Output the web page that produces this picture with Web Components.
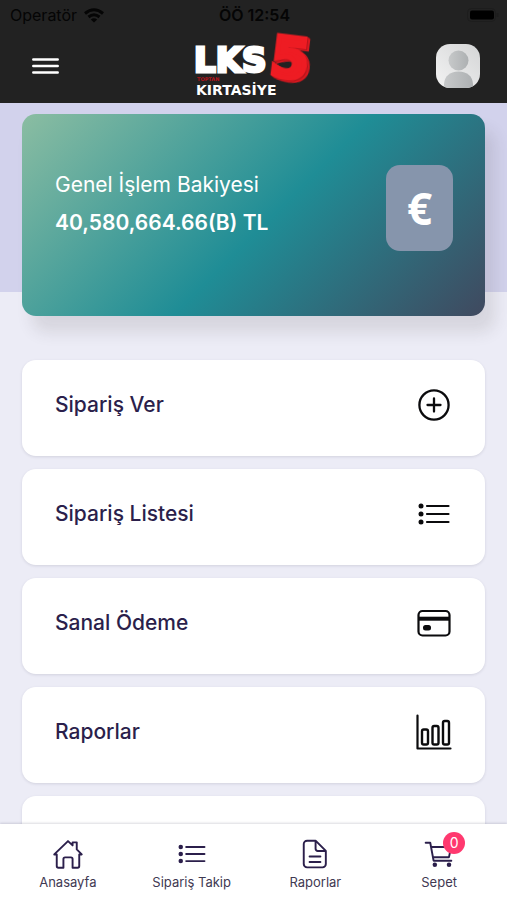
<!DOCTYPE html>
<html lang="tr">
<head>
<meta charset="utf-8">
<meta name="viewport" content="width=device-width, initial-scale=1">
<title>LKS5 Kırtasiye</title>
<style>
  body { margin: 0; font-family: Inter, "Liberation Sans", sans-serif; color: #2b1f4b; background: #ececf6; }
</style>
</head>
<body>
<lks-app>
  <status-bar slot="top" carrier="Operatör" time="ÖÖ 12:54"></status-bar>
  <app-header slot="top"></app-header>
  <balance-card>
    <span slot="label">Genel İşlem Bakiyesi</span>
    <span slot="amount">40,580,664.66(B) TL</span>
  </balance-card>
  <menu-card icon="plus">Sipariş Ver</menu-card>
  <menu-card icon="list">Sipariş Listesi</menu-card>
  <menu-card icon="card">Sanal Ödeme</menu-card>
  <menu-card icon="chart">Raporlar</menu-card>
  <menu-card></menu-card>
  <tab-bar slot="bottom">
    <tab-item icon="home">Anasayfa</tab-item>
    <tab-item icon="list-small">Sipariş Takip</tab-item>
    <tab-item icon="document">Raporlar</tab-item>
    <tab-item icon="cart" badge="0">Sepet</tab-item>
  </tab-bar>
</lks-app>

<script>
const ICONS = {
  plus: '<circle cx="18" cy="18" r="14.6" stroke-width="2.3"/><path d="M18 11.500v13M11.500 18h13" stroke-width="2.3"/>',
  list: '<g fill="currentColor" stroke="none"><circle cx="5" cy="10" r="2.5"/><circle cx="5" cy="18" r="2.5"/><circle cx="5" cy="26" r="2.5"/></g><path d="M11 10h21.500M11 18h21.500M11 26h21.500" stroke-width="2.200"/>',
  card: '<rect x="2.500" y="6" width="31" height="24.500" rx="4" stroke-width="2.200"/><path d="M3 13.700h30" stroke-width="4" stroke-linecap="butt"/><rect x="7" y="20" width="8" height="5.500" rx="2.500" fill="currentColor" stroke="none"/>',
  chart: '<path d="M1.500 1.500v33h33" stroke-width="2.200"/><g stroke-width="2.400"><rect x="6" y="15.500" width="6" height="15" rx="1.700"/><rect x="16.500" y="12" width="6" height="18.500" rx="1.700"/><rect x="27" y="7" width="6" height="23.500" rx="1.700"/></g>',
  home: '<path d="M1.500 18.500 18 2.500l5.500 5.200V4h5v8.500l6 6h-3v14a2 2 0 0 1-2 2h-6V24a2 2 0 0 0-2-2h-7a2 2 0 0 0-2 2v10.500h-6a2 2 0 0 1-2-2v-14z"/>',
  "list-small": '<g fill="currentColor" stroke="none"><circle cx="4.500" cy="9.500" r="2.700"/><circle cx="4.500" cy="18" r="2.700"/><circle cx="4.500" cy="26.500" r="2.700"/></g><path d="M11 9.500h22M11 18h22M11 26.500h22"/>',
  document: '<path d="M8.500 2h10.200L31 14.300V30a4 4 0 0 1-4 4H8.500a4 4 0 0 1-4-4V6a4 4 0 0 1 4-4zM18.700 2v9.800a2.500 2.500 0 0 0 2.500 2.500H31M11.500 21h13M11.500 27.500h13"/>',
  cart: '<path d="M2 4.500h5.500l4 21.500h21.300M9 9.500h23.500l-2.500 12.300H11"/><g fill="currentColor" stroke="none"><circle cx="13" cy="31" r="2.700"/><circle cx="30" cy="31" r="2.700"/></g>'
};

function define(name, render) {
  customElements.define(name, class extends HTMLElement {
    constructor() {
      super();
      this.attachShadow({ mode: "open" }).innerHTML = render(this);
    }
  });
}

define("app-icon", el => `
  <style>
    :host { display: block; width: var(--icon-size, 36px); height: var(--icon-size, 36px); flex: none; }
    svg { display: block; width: 100%; height: 100%; overflow: visible; }
  </style>
  <svg viewBox="0 0 36 36" fill="none" stroke="currentColor" stroke-width="2.3" stroke-linecap="round" stroke-linejoin="round" aria-hidden="true">${ICONS[el.getAttribute("name")] || ""}</svg>`);

define("lks-app", () => `
  <style>
    :host { display: flex; flex-direction: column; height: 100vh; }
    header, footer { flex: none; }
    header { background: #222; }
    main {
      flex: 1; min-height: 0; overflow: auto; scrollbar-width: none;
      display: flex; flex-direction: column; gap: 13px; padding: 11px 22px 13px;
      background: linear-gradient(#d2d2ec, #d2d2ec) top / 100% 189px no-repeat, #ececf6;
    }
  </style>
  <header><slot name="top"></slot></header>
  <main><slot></slot></main>
  <footer><slot name="bottom"></slot></footer>`);

define("status-bar", el => `
  <style>
    :host { display: grid; grid-template-columns: 1fr auto 1fr; align-items: center; height: 30px; padding: 0 8px 0 10px; font-size: 16px; color: #050505; }
    .carrier { display: flex; align-items: center; gap: 7px; }
    strong { font-weight: 600; }
    .battery { justify-self: end; }
    svg { display: block; }
  </style>
  <span class="carrier">${el.getAttribute("carrier")}
    <svg width="20" height="15" viewBox="0 0 20 15" fill="none" stroke="currentColor" stroke-width="3" aria-hidden="true"><path d="M1 5.500Q10-2 19 5.500M4.500 9Q10 4.500 15.500 9"/><path d="M10 14.500 6.800 11.500Q10 9 13.200 11.500z" fill="currentColor" stroke="none"/></svg>
  </span>
  <strong>${el.getAttribute("time")}</strong>
  <svg class="battery" width="32" height="15" viewBox="0 0 32 15" aria-hidden="true"><rect x=".5" y=".5" width="28" height="13" rx="4" fill="none" stroke="#1d1d1d"/><rect x="3" y="2.500" width="24" height="9" rx="2" fill="#000"/><path d="M30.500 5v4" stroke="#1d1d1d" stroke-width="2"/></svg>`);

define("brand-logo", () => `
  <style>
    :host { display: block; }
    svg { display: block; width: 118px; height: 66px; overflow: visible; font-family: "DejaVu Sans", sans-serif; font-weight: 700; }
    .five { filter: drop-shadow(1px 1px 0 #b5141b) drop-shadow(2px 1px 0 #d9181f); }
  </style>
  <svg viewBox="0 0 118 66" role="img" aria-label="LKS5 Kırtasiye">
    <text class="five" x="76" y="44" font-size="55" fill="#ee1c23" stroke="#ee1c23" stroke-width="5" transform="rotate(7 94 24)">5</text>
    <text x="-1" y="39" font-size="34" fill="#fff" stroke="#fff" stroke-width="3">LKS</text>
    <text x="2" y="48" font-size="5" fill="#b5141b">TOPTAN</text>
    <text x="1" y="62" font-size="14" fill="#fff">KIRTASİYE</text>
  </svg>`);

define("app-header", () => `
  <style>
    :host { display: grid; grid-template-columns: 1fr auto 1fr; align-items: center; height: 73px; padding: 0 27px 2px; box-sizing: border-box; }
    button { border: 0; background: none; padding: 5px; color: #fff; cursor: pointer; justify-self: start; }
    button.avatar { justify-self: end; padding: 0; border-radius: 14px; overflow: hidden; }
    svg { display: block; }
  </style>
  <button aria-label="Menü"><svg width="27" height="18" viewBox="0 0 27 18" fill="none" stroke="#fff" stroke-width="2.500" stroke-linecap="round"><path d="M1.300 2.500h24.400M1.300 9h24.400M1.300 15.500h24.400"/></svg></button>
  <brand-logo></brand-logo>
  <button class="avatar" aria-label="Profil"><svg width="44" height="44" viewBox="0 0 44 44">
    <defs><linearGradient id="a" x1="0" x2="1" y1="1" y2="0"><stop stop-color="#f3f3f3"/><stop offset="1" stop-color="#d4d5d6"/></linearGradient>
    <linearGradient id="b" x1="0" x2="1"><stop stop-color="#c7c9ca"/><stop offset="1" stop-color="#adb0b2"/></linearGradient></defs>
    <rect width="44" height="44" fill="url(#a)"/><circle cx="22.500" cy="16.500" r="10" fill="url(#b)"/><path d="M8 44V40q1-12 14.500-12.500Q36 28 37 40v4z" fill="url(#b)"/></svg></button>`);

define("balance-card", () => `
  <style>
    :host {
      display: flex; align-items: flex-start; justify-content: space-between; flex: none;
      box-sizing: border-box; min-height: 202px; padding: 51px 32px 51px 33px; margin-bottom: 31px;
      border-radius: 14px; color: #fff;
      background: linear-gradient(135deg, #8bbda2 0%, #1f8d96 53%, #40495f 100%);
      box-shadow: 10px 16px 16px rgba(60, 50, 50, .12);
    }
    .text { display: flex; flex-direction: column; gap: 10px; padding-top: 6px; line-height: 28px; font-size: 21px; }
    .amount { font-weight: 600; }
    .badge { display: grid; place-items: center; width: 67px; height: 86px; border-radius: 14px; background: #8695ac; font: 700 44px/1 "Noto Sans", sans-serif; }
  </style>
  <div class="text"><div class="label"><slot name="label"></slot></div><div class="amount"><slot name="amount"></slot></div></div>
  <div class="badge">€</div>`);

define("menu-card", el => `
  <style>
    :host { display: block; flex: none; }
    a {
      display: flex; align-items: center; justify-content: space-between; box-sizing: border-box;
      min-height: 96px; padding: 0 33px 6px; border-radius: 14px; background: #fff;
      box-shadow: 0 1px 3px rgba(40, 40, 70, .13);
      color: #2b1f4b; font-size: 21px; font-weight: 500; line-height: 30px; text-decoration: none;
    }
    app-icon { color: #0b0b0d; }
  </style>
  <a href="#"><slot></slot>${el.hasAttribute("icon") ? `<app-icon name="${el.getAttribute("icon")}"></app-icon>` : ""}</a>`);

define("tab-bar", () => `
  <style>
    :host { display: block; position: relative; background: #fff; box-shadow: 0 -1px 2px rgba(40, 40, 70, .16); }
    nav { display: grid; grid-template-columns: repeat(4, 1fr); padding: 0 6px; height: 76px; box-sizing: border-box; }
  </style>
  <nav><slot></slot></nav>`);

define("tab-item", el => `
  <style>
    :host { display: block; }
    a { display: flex; flex-direction: column; align-items: center; gap: 4px; padding-top: 15px; color: #2b1f4b; text-decoration: none; font-size: 13px; line-height: 18px; white-space: nowrap; }
    .icon { position: relative; --icon-size: 30px; }
    .text { color: #3f3952; }
    .badge { position: absolute; top: -7px; right: -11px; width: 22px; height: 22px; border-radius: 50%; background: #ff396f; color: #fff; font-size: 14px; line-height: 22px; text-align: center; }
  </style>
  <a href="#"><span class="icon"><app-icon name="${el.getAttribute("icon")}"></app-icon>${el.hasAttribute("badge") ? `<span class="badge">${el.getAttribute("badge")}</span>` : ""}</span><span class="text"><slot></slot></span></a>`);
</script>
</body>
</html>
